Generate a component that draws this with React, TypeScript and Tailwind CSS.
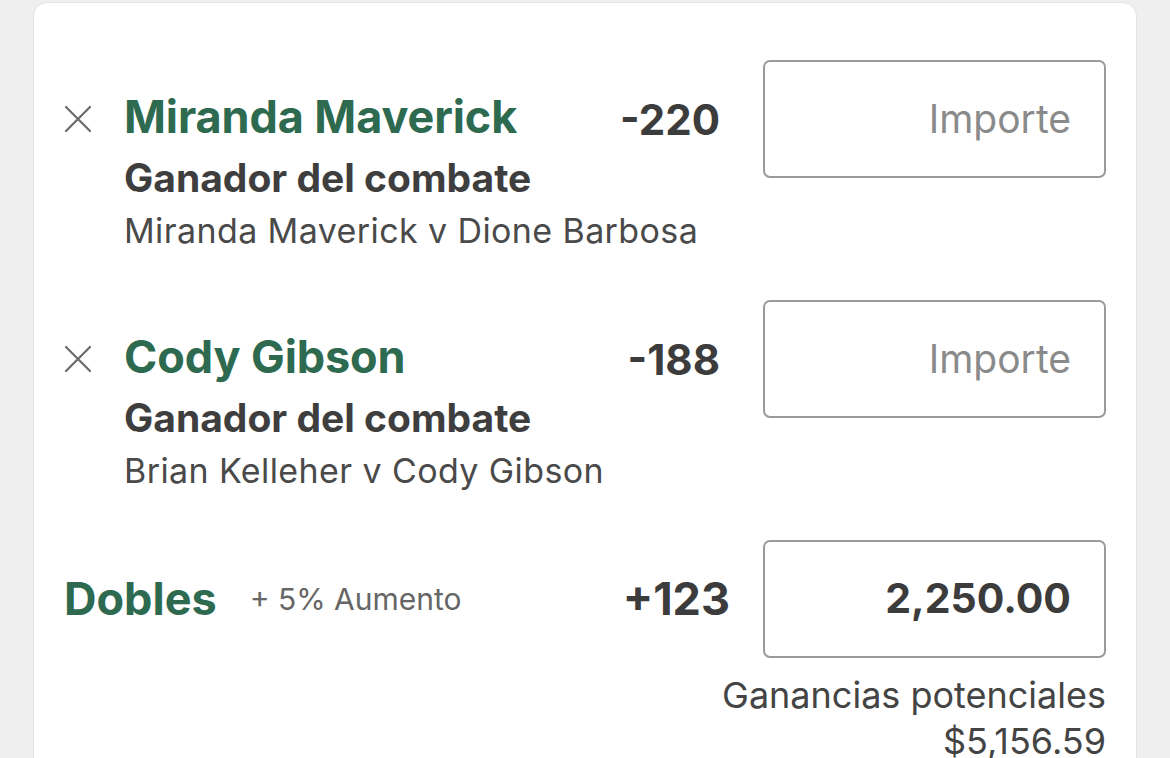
import React from "react";

const GREEN = "text-[#2d6a4f]";

function CloseIcon() {
  return (
    <svg width="28" height="28" viewBox="0 0 28 28" fill="none" stroke="#6b6b6b" strokeWidth="2.2" strokeLinecap="round">
      <path d="M2 2 L26 26 M26 2 L2 26" />
    </svg>
  );
}

function StakeBox({ value }: { value?: string }) {
  return (
    <div className="ml-[43px] flex h-[118px] w-[343px] shrink-0 items-center justify-end rounded-[7px] border-2 border-[#9a9a9a] pr-[33px]">
      {value ? (
        <span className="text-[41px] font-bold text-[#3c3c3c]">{value}</span>
      ) : (
        <span className="text-[39px] text-[#8a8a8a]">Importe</span>
      )}
    </div>
  );
}

function BetRow({ name, odds, match }: { name: string; odds: string; match: string }) {
  return (
    <div className="flex items-start">
      <div className="flex min-w-0 flex-1">
        <div className="flex h-[118px] w-[28px] shrink-0 items-center">
          <CloseIcon />
        </div>
        <div className="ml-[32px] whitespace-nowrap pt-[27px]">
          <div className={`h-[60px] text-[45px] font-bold leading-[60px] tracking-[-0.1px] ${GREEN}`}>{name}</div>
          <div className="h-[62px] text-[39px] font-bold leading-[62px] text-[#3e3e3e]">Ganador del combate</div>
          <div className="h-[44px] text-[34px] leading-[44px] tracking-[0.4px] text-[#4a4a4a]">{match}</div>
        </div>
      </div>
      <div className="flex h-[118px] items-center text-[42px] font-bold text-[#3c3c3c]">{odds}</div>
      <StakeBox />
    </div>
  );
}

export default function App() {
  return (
    <div className="h-[758px] overflow-hidden bg-[#efefef] px-[33px] pt-[2px]" style={{ fontFamily: "Inter, 'Noto Sans', sans-serif" }}>
      <div className="h-[800px] rounded-t-[14px] border border-[#e2e2e2] bg-white px-[30px] pt-[57px]">
        <div className="flex flex-col gap-[47px]">
          <BetRow name="Miranda Maverick" odds="-220" match="Miranda Maverick v Dione Barbosa" />
          <BetRow name="Cody Gibson" odds="-188" match="Brian Kelleher v Cody Gibson" />
        </div>
        <div className="mt-[47px] flex items-start">
          <div className="flex h-[118px] flex-1 items-center">
            <span className={`text-[45px] font-bold ${GREEN}`}>Dobles</span>
            <span className="ml-[33px] text-[30px] text-[#666666]">+ 5% Aumento</span>
          </div>
          <div className="mr-[-10px] flex h-[118px] items-center text-[45px] font-bold text-[#3c3c3c]">+123</div>
          <StakeBox value="2,250.00" />
        </div>
        <div className="mt-[14px] text-right text-[36px] leading-[46px] text-[#444444]">
          <div>Ganancias potenciales</div>
          <div>$5,156.59</div>
        </div>
      </div>
    </div>
  );
}
